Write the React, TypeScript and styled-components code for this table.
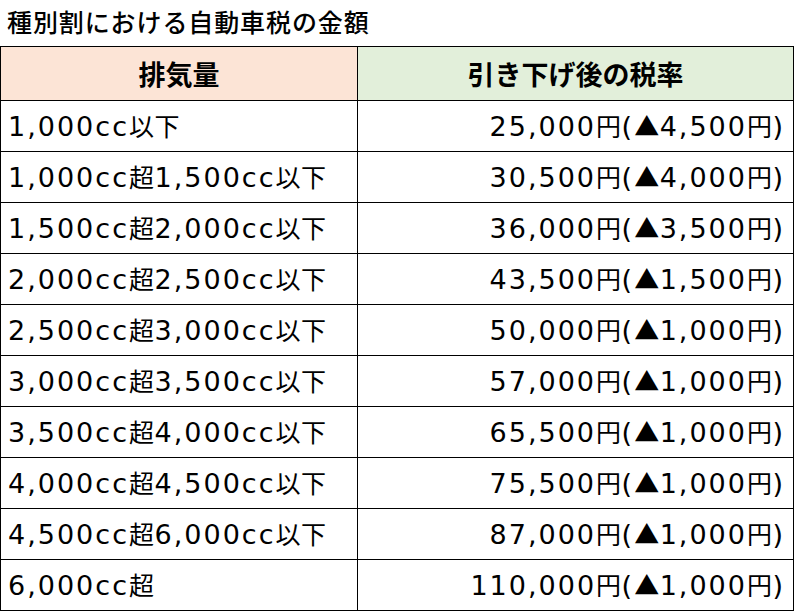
import styled, { createGlobalStyle } from "styled-components";

type Row = { cc: string; tax: string };

const rows: Row[] = [
  { cc: "1,000cc以下", tax: "25,000円(▲4,500円)" },
  { cc: "1,000cc超1,500cc以下", tax: "30,500円(▲4,000円)" },
  { cc: "1,500cc超2,000cc以下", tax: "36,000円(▲3,500円)" },
  { cc: "2,000cc超2,500cc以下", tax: "43,500円(▲1,500円)" },
  { cc: "2,500cc超3,000cc以下", tax: "50,000円(▲1,000円)" },
  { cc: "3,000cc超3,500cc以下", tax: "57,000円(▲1,000円)" },
  { cc: "3,500cc超4,000cc以下", tax: "65,500円(▲1,000円)" },
  { cc: "4,000cc超4,500cc以下", tax: "75,500円(▲1,000円)" },
  { cc: "4,500cc超6,000cc以下", tax: "87,000円(▲1,000円)" },
  { cc: "6,000cc超", tax: "110,000円(▲1,000円)" },
];

// 英数字の部分だけ幅の広いフォントで描く
function Mixed({ text }: { text: string }) {
  return (
    <>
      {text.split(/([0-9A-Za-z,()]+)/).map((part, i) =>
        /[0-9A-Za-z,()]/.test(part) ? <Num key={i}>{part}</Num> : part
      )}
    </>
  );
}

const GlobalStyle = createGlobalStyle`
  body {
    margin: 0;
    background: #fff;
    font-family: "Noto Sans CJK JP", "Noto Sans", sans-serif;
    color: #000;
  }
`;

export default function App() {
  return (
    <Root>
      <GlobalStyle />
      <Title>種別割における自動車税の金額</Title>
      <Table>
        <colgroup>
          <col style={{ width: 357 }} />
          <col />
        </colgroup>
        <thead>
          <tr>
            <HeadCell $bg="#fce4d6">排気量</HeadCell>
            <HeadCell $bg="#e2efda">引き下げ後の税率</HeadCell>
          </tr>
        </thead>
        <tbody>
          {rows.map((r) => (
            <tr key={r.cc}>
              <Cell>
                <Mixed text={r.cc} />
              </Cell>
              <Cell $right>
                <Mixed text={r.tax} />
              </Cell>
            </tr>
          ))}
        </tbody>
      </Table>
    </Root>
  );
}

const Root = styled.div`
  width: 794px;
`;

const Title = styled.div`
  height: 46px;
  line-height: 42px;
  padding-left: 7px;
  font-size: 25px;
  font-weight: 500;
  letter-spacing: 0.9px;
`;

const Table = styled.table`
  width: 794px;
  border-collapse: collapse;
  table-layout: fixed;
`;

const HeadCell = styled.th<{ $bg: string }>`
  height: 53px;
  padding: 0;
  background: ${(p) => p.$bg};
  border: 1.5px solid #000;
  font-size: 27px;
  font-weight: 700;
  text-align: center;
  vertical-align: middle;
`;

const Cell = styled.td<{ $right?: boolean }>`
  height: 50px;
  padding: 0 8px 0 7px;
  border: 1.5px solid #000;
  font-size: 25px;
  font-weight: 400;
  line-height: 1;
  text-align: ${(p) => (p.$right ? "right" : "left")};
  vertical-align: middle;
  white-space: nowrap;
  letter-spacing: 0.5px;
`;

const Num = styled.span`
  font-family: "DejaVu Sans", "Noto Sans", sans-serif;
  font-size: 27px;
  font-weight: 400;
  letter-spacing: 2px;
`;
